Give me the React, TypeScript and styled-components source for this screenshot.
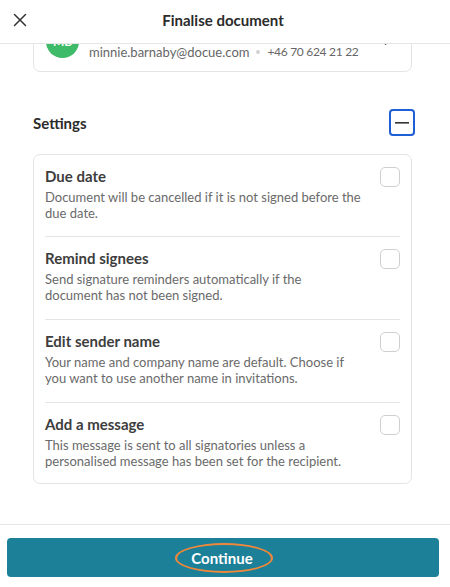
import React from 'react';
import styled, { createGlobalStyle } from 'styled-components';

const GlobalStyle = createGlobalStyle`
  html, body {
    margin: 0;
    padding: 0;
    background: #ffffff;
  }
  body {
    font-family: 'Lato', 'Liberation Sans', sans-serif;
    color: #333333;
  }
  * {
    box-sizing: border-box;
  }
`;

interface Setting {
  title: string;
  lines: string[];
}

// description lines are broken where the design breaks them
const settings: Setting[] = [
  {
    title: 'Due date',
    lines: ['Document will be cancelled if it is not signed before the', 'due date.'],
  },
  {
    title: 'Remind signees',
    lines: ['Send signature reminders automatically if the', 'document has not been signed.'],
  },
  {
    title: 'Edit sender name',
    lines: ['Your name and company name are default. Choose if', 'you want to use another name in invitations.'],
  },
  {
    title: 'Add a message',
    lines: ['This message is sent to all signatories unless a', 'personalised message has been set for the recipient.'],
  },
];

const App: React.FC = () => {
  return (
    <>
      <GlobalStyle />
      <Page>
        <Header>
          <CloseButton aria-label="Close">
            <svg width="14" height="14" viewBox="0 0 14 14" fill="none">
              <path d="M1.5 1.5L12.5 12.5M12.5 1.5L1.5 12.5" stroke="#333" strokeWidth="1.5" strokeLinecap="round" />
            </svg>
          </CloseButton>
          <HeaderTitle>Finalise document</HeaderTitle>
        </Header>

        <Body>
          <RecipientCard>
            <Avatar>MB</Avatar>
            <RecipientInfo>
              <RecipientName>Minnie Barnaby</RecipientName>
              <RecipientMeta>
                <span>minnie.barnaby@docue.com</span>
                <Dot />
                <Phone>+46 70 624 21 22</Phone>
              </RecipientMeta>
            </RecipientInfo>
            <Chevron>
              <svg width="8" height="12" viewBox="0 0 8 12" fill="none">
                <path d="M1.5 1L6.5 6L1.5 11" stroke="#222" strokeWidth="1.6" strokeLinecap="round" strokeLinejoin="round" />
              </svg>
            </Chevron>
          </RecipientCard>

          <SectionHeader>
            <SectionTitle>Settings</SectionTitle>
            <ToggleButton aria-label="Collapse settings">
              <svg width="14" height="2" viewBox="0 0 14 2">
                <rect width="14" height="1.6" fill="#333" />
              </svg>
            </ToggleButton>
          </SectionHeader>

          <SettingsCard>
            {settings.map((s) => (
              <SettingRow key={s.title}>
                <SettingText>
                  <SettingTitle>{s.title}</SettingTitle>
                  <SettingDescription>
                    {s.lines.map((line) => (
                      <span key={line}>{line}</span>
                    ))}
                  </SettingDescription>
                </SettingText>
                <Checkbox />
              </SettingRow>
            ))}
          </SettingsCard>
        </Body>

        <Footer>
          <PrimaryButton>
            <ButtonLabel>Continue</ButtonLabel>
            <Highlight />
          </PrimaryButton>
        </Footer>
      </Page>
    </>
  );
};

const Page = styled.div`
  width: 450px;
  height: 587px;
  display: flex;
  flex-direction: column;
  background: #ffffff;
`;

const Header = styled.header`
  position: relative;
  height: 44px;
  flex-shrink: 0;
  display: flex;
  align-items: center;
  justify-content: center;
  border-bottom: 1px solid #e6e6e6;
`;

const CloseButton = styled.button`
  position: absolute;
  left: 13px;
  top: 13px;
  width: 14px;
  height: 14px;
  padding: 0;
  border: none;
  background: none;
  display: flex;
`;

const HeaderTitle = styled.h1`
  margin: 0 0 4px -4px;
  font-size: 15px;
  font-weight: 700;
  color: #2b2b2b;
`;

const Body = styled.main`
  flex: 1;
  overflow: hidden;
  padding: 0 38px 0 33px;
`;

const RecipientCard = styled.div`
  margin-top: -34px;
  height: 62px;
  border: 1px solid #e4e4e4;
  border-radius: 7px;
  display: flex;
  align-items: center;
  padding: 0 19px 0 12px;
  gap: 10px;
`;

const Avatar = styled.div`
  width: 33px;
  height: 33px;
  border-radius: 50%;
  background: #3dbb68;
  color: #ffffff;
  font-size: 12px;
  font-weight: 700;
  display: flex;
  align-items: center;
  justify-content: center;
  flex-shrink: 0;
`;

const RecipientInfo = styled.div`
  flex: 1;
  display: flex;
  flex-direction: column;
  gap: 4px;
`;

const RecipientName = styled.div`
  font-size: 14px;
  font-weight: 700;
  color: #333;
`;

const RecipientMeta = styled.div`
  display: flex;
  align-items: center;
  gap: 6px;
  font-size: 13px;
  color: #666666;
`;

const Phone = styled.span`
  font-size: 12px;
  letter-spacing: -0.3px;
`;

const Dot = styled.span`
  width: 4px;
  height: 4px;
  border-radius: 50%;
  background: #d2d2d2;
  margin: 0 1px;
`;

const Chevron = styled.div`
  display: flex;
  margin-top: -4px;
`;

const SectionHeader = styled.div`
  display: flex;
  align-items: center;
  justify-content: space-between;
  margin-top: 37px;
  height: 27px;
`;

const SectionTitle = styled.h2`
  margin: 0;
  font-size: 15px;
  font-weight: 700;
  color: #2b2b2b;
`;

const ToggleButton = styled.button`
  width: 26px;
  height: 27px;
  margin-right: -3px;
  padding: 0;
  border: 2px solid #1d5fd6;
  border-radius: 4px;
  background: #ffffff;
  display: flex;
  align-items: center;
  justify-content: center;
`;

const SettingsCard = styled.section`
  margin-top: 18px;
  border: 1px solid #e4e4e4;
  border-radius: 7px;
  padding: 0 11px;
`;

const SettingRow = styled.div`
  display: flex;
  align-items: flex-start;
  justify-content: space-between;
  padding: 11px 0 16px;
  border-top: 1px solid #e4e4e4;

  &:first-child {
    border-top: none;
    padding-bottom: 15px;
  }

  &:last-child {
    padding-bottom: 14px;
  }
`;

const SettingText = styled.div`
  display: flex;
  flex-direction: column;
  gap: 3px;
`;

const SettingTitle = styled.div`
  font-size: 15px;
  line-height: 20px;
  font-weight: 700;
  color: #3d3d3d;
`;

const SettingDescription = styled.div`
  display: flex;
  flex-direction: column;
  font-size: 13px;
  line-height: 16px;
  color: #6a6a6a;
  white-space: nowrap;
`;

const Checkbox = styled.span`
  width: 20px;
  height: 20px;
  margin-top: 1px;
  flex-shrink: 0;
  border: 1px solid #cfcfcf;
  border-radius: 5px;
`;

const Footer = styled.footer`
  flex-shrink: 0;
  border-top: 1px solid #e6e6e6;
  padding: 13px 11px 10px 7px;
`;

const PrimaryButton = styled.button`
  position: relative;
  width: 100%;
  height: 39px;
  border: none;
  border-radius: 4px;
  background: #1b8098;
  color: #ffffff;
  display: flex;
  align-items: center;
  justify-content: center;
  font-family: inherit;
  padding: 0;
`;

const ButtonLabel = styled.span`
  font-size: 15px;
  font-weight: 700;
  margin-left: -2px;
`;

const Highlight = styled.span`
  position: absolute;
  left: 168px;
  top: 5px;
  width: 98px;
  height: 30px;
  border: 2px solid #f0883c;
  border-radius: 50%;
  pointer-events: none;
`;

export default App;
